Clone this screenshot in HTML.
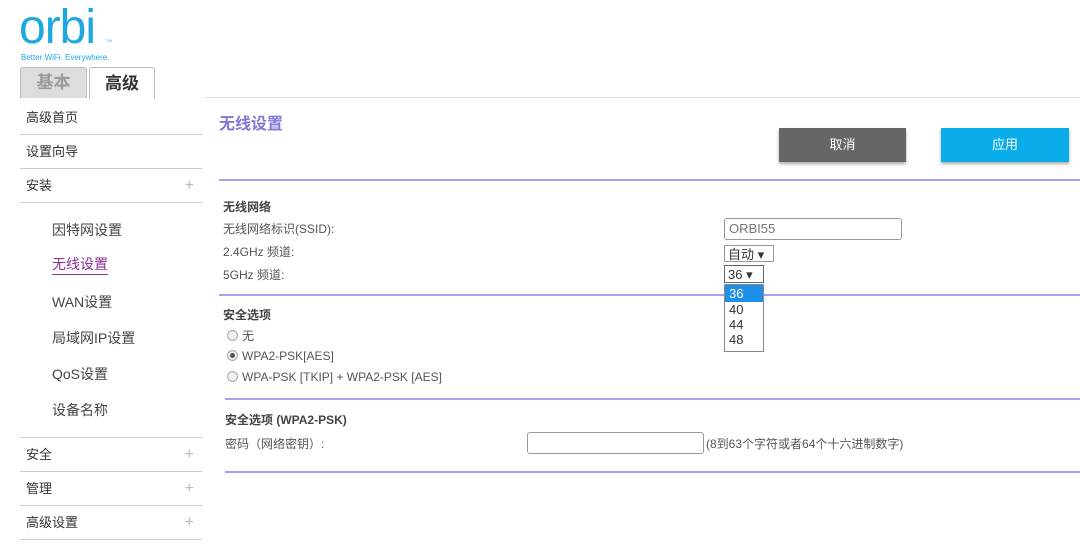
<!DOCTYPE html>
<html><head><meta charset="utf-8"><style>
body{margin:0;width:1080px;height:552px;position:relative;background:#fff;font-family:"Liberation Sans","Noto Sans CJK SC",sans-serif;color:#333;overflow:hidden}
.a{position:absolute;white-space:nowrap}
.nav{position:absolute;left:20px;width:182px;height:33px;border-bottom:1px solid #ccc;font-size:13px;line-height:33px;text-indent:6px;color:#333}
.plus{position:absolute;right:8px;top:0;color:#bbb;font-size:16px}
.sub{position:absolute;left:52px;font-size:14px;color:#444}
.hr{position:absolute;height:2px;background:#a9a0f0}
.t{font-size:12px;color:#555;line-height:14px}
.rad{display:inline-block;width:9px;height:9px;border:1px solid #aaa;border-radius:50%;background:#eee;vertical-align:-1px;margin-right:4px;position:relative}
</style></head><body>
<div class="a" style="left:19px;top:0px;font-size:48px;color:#1fa8e0;letter-spacing:-1px;font-weight:300">orbi</div>
<div class="a" style="left:106px;top:38px;font-size:4px;color:#1fa8e0">TM</div>
<div class="a" style="left:21px;top:53px;font-size:8px;color:#1fa8e0">Better WiFi. Everywhere.</div>
<div class="a" style="left:20px;top:67px;width:65px;height:30px;background:#ddd;border:1px solid #bbb;border-bottom:none;border-radius:3px 3px 0 0;text-align:center;font-size:17px;line-height:30px;color:#999;font-weight:bold">基本</div>
<div class="a" style="left:89px;top:67px;width:64px;height:31px;background:#fff;border:1px solid #bbb;border-bottom:none;border-radius:3px 3px 0 0;text-align:center;font-size:17px;line-height:31px;color:#333;font-weight:bold">高级</div>
<div class="a" style="left:205px;top:97px;width:875px;height:1px;background:#ddd"></div>
<div class="nav" style="top:101px">高级首页</div>
<div class="nav" style="top:135px">设置向导</div>
<div class="nav" style="top:169px">安装<span class="plus">+</span></div>
<div class="sub" style="top:220px">因特网设置</div>
<div class="sub" style="top:254px;color:#8e2d96;border-bottom:1px solid #8e2d96">无线设置</div>
<div class="sub" style="top:292px">WAN设置</div>
<div class="sub" style="top:328px">局域网IP设置</div>
<div class="sub" style="top:364px">QoS设置</div>
<div class="sub" style="top:400px">设备名称</div>
<div class="nav" style="top:437px;border-top:1px solid #ccc">安全<span class="plus">+</span></div>
<div class="nav" style="top:472px">管理<span class="plus">+</span></div>
<div class="nav" style="top:506px">高级设置<span class="plus">+</span></div>
<div class="a" style="left:219px;top:110px;font-size:16px;font-weight:bold;color:#8078d8">无线设置</div>
<div class="a" style="left:779px;top:128px;width:127px;height:34px;background:#666;color:#fff;font-size:13px;line-height:34px;text-align:center;box-shadow:0 2px 3px #aaa">取消</div>
<div class="a" style="left:941px;top:128px;width:128px;height:34px;background:#0aacea;color:#fff;font-size:13px;line-height:34px;text-align:center;box-shadow:0 2px 3px #aaa">应用</div>
<div class="hr" style="left:219px;top:179px;width:861px"></div>
<div class="a t" style="left:223px;top:200px;font-weight:bold;color:#444">无线网络</div>
<div class="a t" style="left:223px;top:222px">无线网络标识(SSID):</div>
<div class="a t" style="left:223px;top:245px">2.4GHz 频道:</div>
<div class="a t" style="left:223px;top:268px">5GHz 频道:</div>
<div class="a" style="left:724px;top:218px;width:172px;height:20px;border:1px solid #999;border-radius:3px;font-size:13px;line-height:20px;padding-left:4px;color:#777">ORBI55</div>
<div class="a" style="left:724px;top:245px;width:50px;height:17px;border:1px solid #999;font-size:13px;line-height:17px;padding-left:3px;box-sizing:border-box">自动 ▾</div>
<div class="a" style="left:724px;top:265px;width:40px;height:18px;border:1px solid #666;font-size:13px;line-height:17px;padding-left:3px;box-sizing:border-box">36 ▾</div>
<div class="hr" style="left:219px;top:294px;width:861px"></div>
<div class="a" style="left:724px;top:284px;width:40px;height:68px;border:1px solid #888;background:#fff;font-size:13px;line-height:15px;box-sizing:border-box">
<div style="background:#1e8fe8;color:#fff;padding-left:4px;height:17px;line-height:17px">36</div><div style="padding-left:4px">40</div><div style="padding-left:4px">44</div><div style="padding-left:4px">48</div></div>
<div class="a t" style="left:223px;top:308px;font-weight:bold;color:#444">安全选项</div>
<div class="a t" style="left:227px;top:329px"><span class="rad"></span>无</div>
<div class="a t" style="left:227px;top:349px"><span class="rad"><span style="position:absolute;left:2px;top:2px;width:5px;height:5px;border-radius:50%;background:#555"></span></span>WPA2-PSK[AES]</div>
<div class="a t" style="left:227px;top:370px"><span class="rad"></span>WPA-PSK [TKIP] + WPA2-PSK [AES]</div>
<div class="hr" style="left:225px;top:398px;width:855px"></div>
<div class="a t" style="left:225px;top:413px;font-weight:bold;color:#444">安全选项 (WPA2-PSK)</div>
<div class="a t" style="left:225px;top:437px">密码（网络密钥）:</div>
<div class="a" style="left:527px;top:432px;width:175px;height:20px;border:1px solid #999;border-radius:3px"></div>
<div class="a t" style="left:706px;top:437px">(8到63个字符或者64个十六进制数字)</div>
<div class="hr" style="left:225px;top:471px;width:855px"></div>
</body></html>
